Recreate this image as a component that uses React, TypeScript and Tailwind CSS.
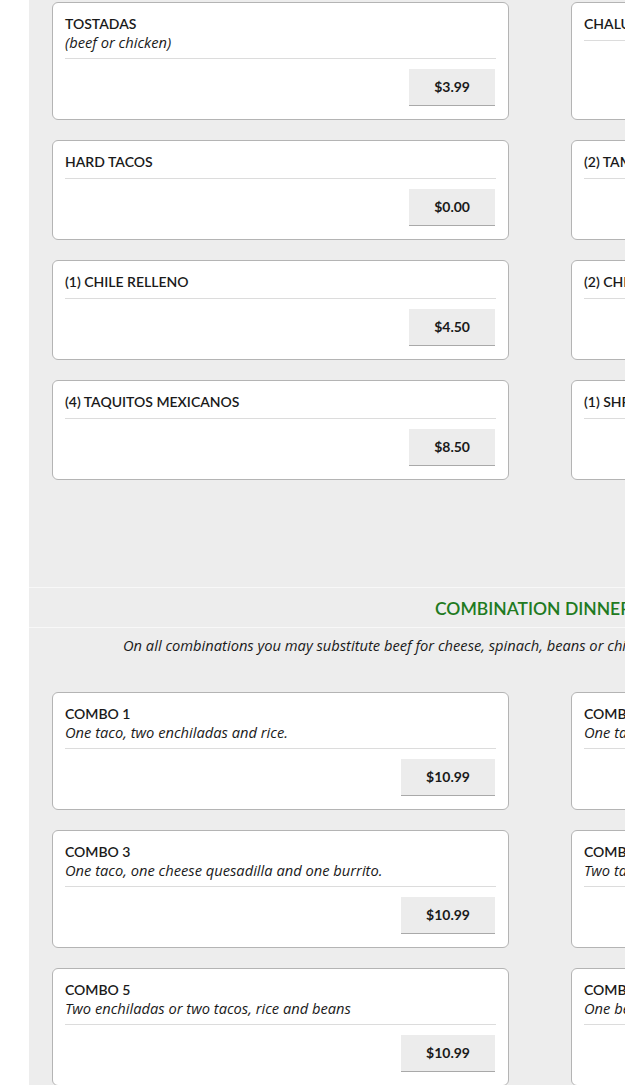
import React from "react";

type Item = { title: string; desc?: string; price: string };

function Card({ item }: { item: Item }) {
  return (
    <div className="bg-white border border-[#b4b4b4] rounded-[6px] px-[12px] pt-[12px] pb-[13px] flex flex-col">
      <div className="text-[14px] leading-[18px] font-semibold text-[#1a1a1a] whitespace-nowrap">{item.title}</div>
      {item.desc && (
        <div
          className="text-[14.7px] leading-[18px] italic text-[#1a1a1a] whitespace-nowrap"
          style={{ fontFamily: "'Open Sans', Lato, sans-serif" }}
        >
          {item.desc}
        </div>
      )}
      <div className="mt-[7px] border-t border-[#dcdcdc]" />
      <div className="mt-auto pt-[10px] flex justify-end pr-[1px]">
        <div className="bg-[#ececec] border-b border-[#a9a9a9] px-[25px] py-[8px] text-[14px] leading-[20px] font-bold text-[#1a1a1a]">
          {item.price}
        </div>
      </div>
    </div>
  );
}

function Grid({ rows }: { rows: { l: Item; r: Item }[] }) {
  return (
    <div className="grid grid-cols-[457px_457px] gap-x-[62px] gap-y-[20px]">
      {rows.map((row, i) => (
        <React.Fragment key={i}>
          <Card item={row.l} />
          <Card item={row.r} />
        </React.Fragment>
      ))}
    </div>
  );
}

export default function App() {
  const top = [
    { l: { title: "TOSTADAS", desc: "(beef or chicken)", price: "$3.99" }, r: { title: "CHALUPAS", price: "$3.99" } },
    { l: { title: "HARD TACOS", price: "$0.00" }, r: { title: "(2) TAMALES", price: "$6.50" } },
    { l: { title: "(1) CHILE RELLENO", price: "$4.50" }, r: { title: "(2) CHIMICHANGAS", price: "$8.50" } },
    { l: { title: "(4) TAQUITOS MEXICANOS", price: "$8.50" }, r: { title: "(1) SHRIMP TACO", price: "$4.50" } },
  ];
  const combos = [
    {
      l: { title: "COMBO 1", desc: "One taco, two enchiladas and rice.", price: "$10.99" },
      r: { title: "COMBO 2", desc: "One taco, one tamale and rice.", price: "$10.99" },
    },
    {
      l: { title: "COMBO 3", desc: "One taco, one cheese quesadilla and one burrito.", price: "$10.99" },
      r: { title: "COMBO 4", desc: "Two tacos, rice and beans.", price: "$10.99" },
    },
    {
      l: { title: "COMBO 5", desc: "Two enchiladas or two tacos, rice and beans", price: "$10.99" },
      r: { title: "COMBO 6", desc: "One beef burrito, rice and beans.", price: "$10.99" },
    },
  ];
  return (
    <div
      className="w-[625px] h-[1085px] overflow-hidden bg-white flex"
      style={{ fontFamily: "Lato, 'Noto Sans', sans-serif" }}
    >
      <div className="w-[29px] shrink-0 bg-white" />
      <div className="flex-1 min-w-0 bg-[#ededed] overflow-hidden">
        <div className="w-[1100px]">
          <div className="pt-[2px] pl-[23px] pb-[107px]">
            <Grid rows={top} />
          </div>
          <div className="border-t border-b border-[#f8f8f8] h-[41px] flex items-center pl-[406px] pt-[3px]">
            <div className="text-[17.5px] font-semibold text-[#217a21] whitespace-nowrap">
              COMBINATION DINNERS
            </div>
          </div>
          <div
            className="pt-[7px] pl-[94px] text-[14.7px] leading-[20px] italic text-[#1a1a1a] whitespace-nowrap"
            style={{ fontFamily: "'Open Sans', Lato, sans-serif" }}
          >
            On all combinations you may substitute beef for cheese, spinach, beans or chicken.
          </div>
          <div className="pt-[37px] pl-[23px]">
            <Grid rows={combos} />
          </div>
        </div>
      </div>
    </div>
  );
}
